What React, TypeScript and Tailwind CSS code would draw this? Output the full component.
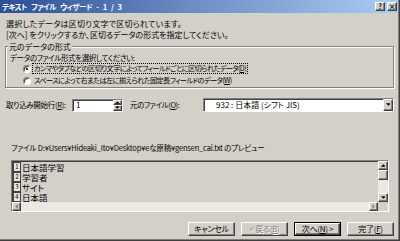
import React from "react";

const F = "font-['Noto_Sans_CJK_JP','Noto_Sans_CJK_SC',sans-serif] [font-feature-settings:'palt']";
const RAISED =
  "border-t border-l border-r border-b border-t-white border-l-white border-r-[#404040] border-b-[#404040] shadow-[inset_-1px_-1px_0_#808080] bg-[#d4d0c8]";
const SUNKEN =
  "border-t border-l border-r border-b border-t-[#808080] border-l-[#808080] border-r-white border-b-white shadow-[inset_1px_1px_0_#404040]";

function Tri({ dir, color = "#000" }: { dir: "up" | "down" | "left" | "right"; color?: string }) {
  const pts =
    dir === "up" ? "0,4 7,4 3.5,0.5" : dir === "down" ? "0,0.5 7,0.5 3.5,4" : dir === "left" ? "4,0 4,7 0.5,3.5" : "0.5,0 0.5,7 4,3.5";
  const w = dir === "up" || dir === "down" ? 7 : 4.5;
  const h = dir === "up" || dir === "down" ? 4.5 : 7;
  return (
    <svg width={w * 0.7} height={h * 0.7} viewBox={`0 0 ${w} ${h}`} className="block">
      <polygon points={pts} fill={color} />
    </svg>
  );
}

function Btn({ label, def, disabled }: { label: React.ReactNode; def?: boolean; disabled?: boolean }) {
  const inner = (
    <div
      className={`${RAISED} flex h-full w-full items-center justify-center whitespace-nowrap text-[8px] leading-none tracking-[-0.3px] ${
        disabled ? "text-[#808080] [text-shadow:1px_1px_0_#fff]" : "text-black"
      }`}
    >
      {label}
    </div>
  );
  return <div className={`h-[14px] w-[47px] ${def ? "border border-black" : ""}`}>{inner}</div>;
}

export default function App() {
  const rows = ["日本語学習", "学習者", "サイト", "日本語"];
  return (
    <div className={`h-[241px] w-[400px] overflow-hidden bg-[#404040] pr-px pb-px ${F}`}>
      <div className="h-full w-full bg-[#808080] pr-px pb-px">
        <div className="flex h-full w-full flex-col bg-[#d4d0c8] text-black">
          {/* Title bar */}
          <div className="flex h-[13px] shrink-0 items-center bg-gradient-to-r from-[#2c4f96] via-[#6e8fc6] to-[#a9cdf3] pl-[2px] pr-[1px]">
            <span className="whitespace-pre text-[7.5px] font-bold leading-none tracking-[-0.5px] text-white [word-spacing:3px]">
              テキスト ファイル ウィザード - 1 / 3
            </span>
            <div className="ml-auto flex gap-[2px]">
              <div className={`${RAISED} flex h-[9px] w-[10px] items-center justify-center text-[7px] font-bold leading-none`}>?</div>
              <div className={`${RAISED} flex h-[9px] w-[10px] items-center justify-center text-[7px] font-bold leading-none`}>×</div>
            </div>
          </div>

          {/* Intro lines */}
          <div className="mt-[5px] h-[11px] whitespace-nowrap pl-[6px] text-[8px] leading-[11px] tracking-[0.25px]">
            選択したデータは区切り文字で区切られています。
          </div>
          <div className="h-[11px] whitespace-nowrap pl-[6px] text-[8px] leading-[11px]">
            [次へ] をクリックするか、区切るデータの形式を指定してください。
          </div>

          {/* Group box */}
          <div className="ml-[5px] mt-[6px] w-[389px] border border-[#808080] pb-[1px] shadow-[inset_1px_1px_0_#fff,1px_1px_0_#fff]">
            <div className="-mt-[6px] ml-[2px] h-[11px] w-fit whitespace-nowrap bg-[#d4d0c8] px-[1px] text-[8px] leading-[11px]">
              元のデータの形式
            </div>
            <div className="h-[11px] whitespace-nowrap pl-[4px] text-[7.5px] leading-[11px] tracking-[-0.4px]">
              データのファイル形式を選択してください:
            </div>
            <div className="flex h-[11px] items-center pl-[17px]">
              <div className="relative h-[8px] w-[8px] rounded-full border border-t-[#808080] border-l-[#808080] border-r-white border-b-white bg-white shadow-[inset_1px_1px_0_#404040]">
                <div className="absolute left-[2px] top-[2px] h-[2px] w-[2px] rounded-full bg-black" />
              </div>
              <span className="ml-[1px] whitespace-nowrap border border-dotted border-black px-[1px] text-[7.2px] leading-[9px] tracking-[-0.6px]">
                カンマやタブなどの区切り文字によってフィールドごとに区切られたデータ(<u>D</u>)
              </span>
            </div>
            <div className="mt-[1px] flex h-[11px] items-center pl-[17px]">
              <div className="h-[8px] w-[8px] rounded-full border border-t-[#808080] border-l-[#808080] border-r-white border-b-white bg-white shadow-[inset_1px_1px_0_#404040]" />
              <span className="ml-[2px] whitespace-nowrap px-[1px] text-[7.2px] leading-[9px] tracking-[-0.6px]">
                スペースによって右または左に揃えられた固定長フィールドのデータ(<u>W</u>)
              </span>
            </div>
          </div>

          {/* Start row / origin */}
          <div className="mt-[10px] flex h-[14px] items-center pl-[6px] text-[8px] leading-none">
            <span className="w-[66px] shrink-0 whitespace-nowrap text-[7.5px] tracking-[-0.3px]">
              取り込み開始行(<u>R</u>):
            </span>
            <div className={`${SUNKEN} flex h-[13px] w-[51px] shrink-0 items-center bg-white`}>
              <span className="ml-[3px] flex-1">1</span>
              <div className="flex h-full w-[9px] flex-col">
                <div className={`${RAISED} flex h-1/2 items-center justify-center`}>
                  <Tri dir="up" />
                </div>
                <div className={`${RAISED} flex h-1/2 items-center justify-center`}>
                  <Tri dir="down" />
                </div>
              </div>
            </div>
            <span className="ml-[7px] w-[73px] shrink-0 whitespace-nowrap text-[7.5px] tracking-[-0.4px]">
              元のファイル(<u>O</u>):
            </span>
            <div className={`${SUNKEN} flex h-[14px] w-[191px] shrink-0 items-center bg-white`}>
              <span className="ml-[12px] flex-1 whitespace-nowrap">932 : 日本語 (シフト JIS)</span>
              <div className={`${RAISED} flex h-full w-[10px] items-center justify-center`}>
                <Tri dir="down" />
              </div>
            </div>
          </div>

          {/* File label */}
          <div className="mt-[30px] h-[11px] whitespace-nowrap pl-[11px] text-[7.5px] leading-[11px] tracking-[-0.17px]">
            ファイル D:¥Users¥Hideaki_Ito¥Desktop¥eな原稿¥gensen_cai.txt のプレビュー
          </div>

          {/* Preview */}
          <div
            className={`${SUNKEN} ml-[11px] mt-[7px] grid h-[52px] w-[378px] grid-cols-[1fr_10px] grid-rows-[1fr_9px] bg-[#d4d0c8]`}
          >
            <div className="flex flex-col overflow-hidden pl-[1px] pt-[1px]">
              {rows.map((r, i) => (
                <div key={i} className="flex h-[10px] shrink-0 items-center">
                  <div className="flex h-[10px] w-[8px] items-center justify-center border border-[#404040] bg-[#e8e6e0] text-[6px] leading-none">
                    {i + 1}
                  </div>
                  <span className="ml-[1px] whitespace-nowrap text-[8.5px] leading-none">{r}</span>
                </div>
              ))}
            </div>
            <div className="row-span-2 flex flex-col">
              <div className={`${RAISED} flex h-[9px] items-center justify-center`}>
                <Tri dir="up" />
              </div>
              <div className={`${RAISED} h-[10px]`} />
              <div className="flex-1 bg-[#ebe9e4]" />
              <div className={`${RAISED} flex h-[9px] items-center justify-center`}>
                <Tri dir="down" />
              </div>
              <div className="h-[9px] bg-[#d4d0c8]" />
            </div>
            <div className="flex bg-[#ebe9e4]">
              <div className={`${RAISED} flex w-[9px] items-center justify-center`}>
                <Tri dir="left" color="#808080" />
              </div>
              <div className="flex-1" />
              <div className={`${RAISED} flex w-[9px] items-center justify-center`}>
                <Tri dir="right" color="#808080" />
              </div>
            </div>
          </div>

          {/* Buttons */}
          <div className="mt-[10px] flex gap-[6px] pl-[188px]">
            <Btn label="キャンセル" />
            <Btn label={<span>&lt; 戻る(<u>B</u>)</span>} disabled />
            <Btn label={<span>次へ(<u>N</u>) &gt;</span>} def />
            <Btn label={<span>完了(<u>F</u>)</span>} />
          </div>
        </div>
      </div>
    </div>
  );
}
